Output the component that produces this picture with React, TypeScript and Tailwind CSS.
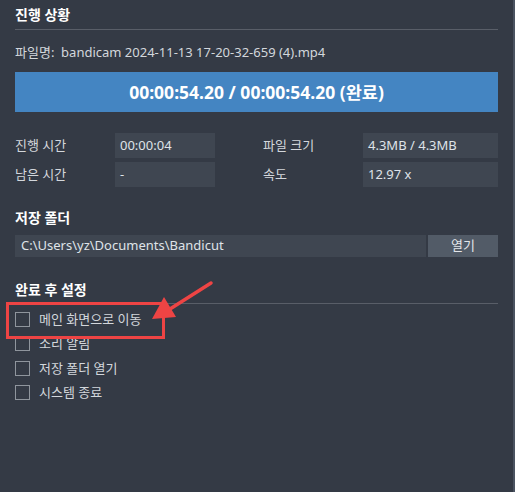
const font = { fontFamily: '"Noto Sans", "Noto Sans CJK KR", sans-serif' };

const Field = ({ label, value, wide }: { label: string; value: string; wide?: boolean }) => (
  <div className="flex items-center h-[25px]">
    <div className="w-[100px] text-[13px] text-[#d3d7dc]">{label}</div>
    <div
      className={`${wide ? "w-[135px]" : "w-[100px]"} h-[25px] bg-[#3f4651] flex items-center px-[5px] text-[13px] text-[#dfe3e8]`}
    >
      {value}
    </div>
  </div>
);

const Check = ({ label }: { label: string }) => (
  <div className="flex items-center h-[24.5px] gap-[9px]">
    <div className="w-[15px] h-[15px] border border-[#8f959d]" />
    <span className="text-[13px] text-[#d3d7dc]">{label}</span>
  </div>
);

export default function App() {
  return (
    <div className="relative w-[515px] h-[492px] bg-[#343a45] overflow-hidden" style={font}>
      <div className="absolute right-0 top-0 w-[2px] h-full bg-[#4a5260]" />
      <div className="px-[15px] w-[498px] box-content pr-0">
        <div className="pt-[5px] h-[25px] leading-[20px] text-[14px] font-bold text-white">진행 상황</div>
        <div className="mt-[4px] border-t border-[#595e68] w-[483px]" />

        <div className="mt-[13px] leading-[18px] text-[13px] text-[#d3d7dc]">
          파일명:&nbsp; bandicam 2024-11-13 17-20-32-659 (4).mp4
        </div>

        <div className="mt-[11px] w-[483px] h-[40px] bg-[#4485c2] flex items-center justify-center text-[17.5px] font-bold text-white">
          00:00:54.20 / 00:00:54.20 (완료)
        </div>

        <div className="mt-[21px] flex flex-col gap-[4px]">
          <div className="flex gap-[48px]">
            <Field label="진행 시간" value="00:00:04" />
            <Field label="파일 크기" value="4.3MB / 4.3MB" wide />
          </div>
          <div className="flex gap-[48px]">
            <Field label="남은 시간" value="-" />
            <Field label="속도" value="12.97 x" wide />
          </div>
        </div>

        <div className="mt-[21px] h-[20px] leading-[20px] text-[14px] font-bold text-white">저장 폴더</div>
        <div className="mt-[7px] flex gap-[2px] w-[483px]">
          <div className="flex-1 h-[22px] bg-[#3f4651] flex items-center px-[6px] text-[13px] text-[#dfe3e8]">
            C:\Users\yz\Documents\Bandicut
          </div>
          <button className="w-[70px] h-[22px] bg-[#525b67] text-[13px] text-[#e3e6ea]">열기</button>
        </div>

        <div className="mt-[23px] h-[20px] leading-[20px] text-[14px] font-bold text-white">완료 후 설정</div>
        <div className="mt-[3px] border-t border-[#595e68] w-[483px]" />

        <div className="mt-[3px] flex flex-col">
          <Check label="메인 화면으로 이동" />
          <Check label="소리 알림" />
          <Check label="저장 폴더 열기" />
          <Check label="시스템 종료" />
        </div>
      </div>

      <svg className="absolute left-0 top-0 pointer-events-none" width="515" height="492">
        <rect x="7.5" y="303.5" width="156" height="34" fill="none" stroke="#ee4444" strokeWidth="3" />
        <line x1="211" y1="283" x2="170" y2="309" stroke="#ee4444" strokeWidth="3.5" strokeLinecap="round" />
        <polygon points="152,319 164,297 176,317" fill="#ee4444" />
      </svg>
    </div>
  );
}
